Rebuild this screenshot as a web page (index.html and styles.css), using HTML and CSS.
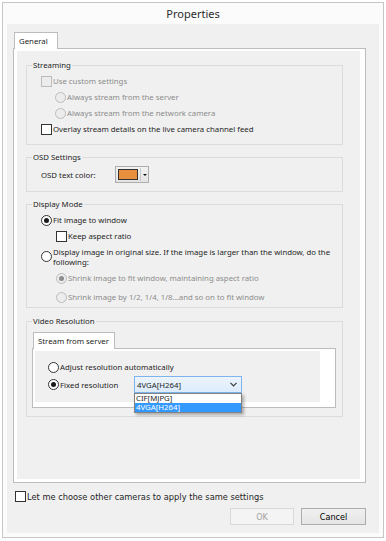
FILE: index.html
```html
<!DOCTYPE html>
<html>
<head>
    <title>Properties</title>
    <link rel="stylesheet" href="styles.css">
</head>
<body>
    <div class="window">
        <div class="titlebar">Properties</div>
        <div class="client">
            <div class="tabctl">
                <div class="tabstrip">
                    <div class="tab general">General</div>
                </div>
                <div class="tabpane main-pane">
                    <div class="page">
                        <fieldset class="group">
                            <legend>Streaming</legend>
                            <label class="opt disabled"><span class="box"></span>Use custom settings</label>
                            <label class="opt sub disabled"><span class="radio"></span>Always stream from the server</label>
                            <label class="opt sub disabled"><span class="radio"></span>Always stream from the network camera</label>
                            <label class="opt"><span class="box"></span>Overlay stream details on the live camera channel feed</label>
                        </fieldset>

                        <fieldset class="group">
                            <legend>OSD Settings</legend>
                            <div class="osd-row">
                                <span class="osd-label">OSD text color:</span>
                                <span class="color-btn">
                                    <span class="swatch"></span>
                                    <span class="arrow"></span>
                                </span>
                            </div>
                        </fieldset>

                        <fieldset class="group display">
                            <legend>Display Mode</legend>
                            <label class="opt"><span class="radio on"></span>Fit image to window</label>
                            <label class="opt sub2"><span class="box"></span>Keep aspect ratio</label>
                            <label class="opt multi"><span class="radio"></span><span>Display image in original size. If the image is larger than the window, do the following:</span></label>
                            <label class="opt sub2 disabled shrink1"><span class="radio on"></span>Shrink image to fit window, maintaining aspect ratio</label>
                            <label class="opt sub2 disabled shrink2"><span class="radio"></span>Shrink image by 1/2, 1/4, 1/8...and so on to fit window</label>
                        </fieldset>

                        <fieldset class="group video">
                            <legend>Video Resolution</legend>
                            <div class="tabctl inner">
                                <div class="tabstrip">
                                    <div class="tab server">Stream from server</div>
                                </div>
                                <div class="tabpane inner-pane">
                                    <div class="subpage">
                                        <label class="opt flat"><span class="radio"></span>Adjust resolution automatically</label>
                                        <div class="opt flat fixed">
                                            <span class="radio on"></span>
                                            <span class="fixed-label">Fixed resolution</span>
                                            <div class="combo">
                                                <span>4VGA[H264]</span>
                                                <svg width="7" height="5" viewBox="0 0 7 5"><polyline points="0.5,0.8 3.5,3.8 6.5,0.8" fill="none" stroke="#3a3a3a" stroke-width="1.2"/></svg>
                                                <div class="dropdown">
                                                    <div class="item">CIF[MJPG]</div>
                                                    <div class="item sel">4VGA[H264]</div>
                                                </div>
                                            </div>
                                        </div>
                                    </div>
                                </div>
                            </div>
                        </fieldset>
                    </div>
                </div>
            </div>

            <label class="opt apply"><span class="box"></span>Let me choose other cameras to apply the same settings</label>

            <div class="buttons">
                <button type="button" class="btn ok" disabled>OK</button>
                <button type="button" class="btn cancel">Cancel</button>
            </div>
        </div>
    </div>
</body>
</html>
```

FILE: styles.css
```css
body {
    margin: 0;
    background: #fff;
    font-family: "Noto Sans", sans-serif;
    font-size: 7.8px;
    color: #1e1e1e;
}
.window {
    width: 382px;
    margin: 2px 0 0 2px;
    padding: 0 4px 4px 4px;
    border: 1px solid #c6c6c6;
    box-sizing: border-box;
    background: #fbfbfb;
}
.titlebar {
    height: 21px;
    line-height: 21px;
    text-align: center;
    font-size: 11px;
    color: #2b2b2b;
}
.client {
    background: #f0f0f0;
    padding: 8px 13px 8px 6px;
}

/* tabs */
.tabstrip {
    display: flex;
    height: 16px;
}
.tab {
    position: relative;
    height: 17px;
    margin-left: 1px;
    padding-left: 4px;
    border: 1px solid #bcbcbc;
    border-bottom: none;
    box-sizing: border-box;
    background: #fff;
    line-height: 16px;
    white-space: nowrap;
}
.tab.general {
    width: 44px;
}
.tab.server {
    width: 82px;
}
.tabpane {
    border: 1px solid #bcbcbc;
    box-sizing: border-box;
    background: #fff;
}
.main-pane {
    height: 435px;
    padding: 2px 5px 3px 3px;
}
.page {
    height: 100%;
    box-sizing: border-box;
    padding: 6px 17px 0 9px;
    background: #f0f0f0;
}

/* group boxes */
.group {
    margin: 0;
    padding: 0 6px 7px 5px;
    border: 1px solid #dcdcdc;
    min-width: 0;
}
.group + .group {
    margin-top: 4px;
}
.group legend {
    padding: 0 1px;
    line-height: 16px;
}
.group.display {
    padding-bottom: 2px;
}
.group.video {
    margin-top: 5px;
    padding-bottom: 8px;
}

/* options */
.opt {
    display: flex;
    align-items: center;
    gap: 1px;
    height: 16px;
    margin-left: 9px;
    white-space: nowrap;
}
.opt.sub {
    margin-left: 23px;
}
.opt.sub2 {
    margin-left: 24px;
}
.opt.multi {
    height: 25px;
    line-height: 10px;
    white-space: normal;
}
.opt.shrink1 {
    margin-top: 1px;
}
.opt.shrink2 {
    margin-top: 3px;
}
.opt.disabled {
    color: #8c8c8c;
}
.box, .radio {
    flex: none;
    width: 11px;
    height: 11px;
    box-sizing: border-box;
    border: 1px solid #333;
    background: #fff;
}
.radio {
    display: flex;
    align-items: center;
    justify-content: center;
    border-radius: 50%;
}
.radio.on::after {
    content: "";
    width: 5px;
    height: 5px;
    border-radius: 50%;
    background: #1a1a1a;
}
.disabled .box, .disabled .radio {
    border-color: #bcbcbc;
    background: #ececec;
}
.disabled .radio.on::after {
    background: #8c8c8c;
}

/* osd color picker */
.osd-row {
    display: flex;
    align-items: center;
    height: 19px;
    margin-left: 9px;
}
.osd-label {
    width: 74px;
}
.color-btn {
    display: flex;
    align-items: center;
    width: 34px;
    height: 17px;
    padding-left: 2px;
    border: 1px solid #adadad;
    box-sizing: border-box;
    background: linear-gradient(#f2f2f2, #e3e3e3);
}
.swatch {
    width: 20px;
    height: 11px;
    border: 1px solid #333;
    box-sizing: border-box;
    background: #e8903d;
}
.arrow {
    display: flex;
    align-items: center;
    justify-content: center;
    width: 8px;
    height: 13px;
    margin-left: 2px;
    border-left: 1px solid #c9c9c9;
    box-sizing: border-box;
}
.arrow::after {
    content: "";
    border-left: 2px solid transparent;
    border-right: 2px solid transparent;
    border-top: 2px solid #111;
}

/* video resolution */
.tabctl.inner {
    margin-top: 3px;
}
.inner-pane {
    height: 60px;
    padding: 2px 15px 5px 2px;
}
.subpage {
    padding: 8px 0 9px 13px;
    background: #f0f0f0;
}
.opt.flat {
    margin-left: 0;
}
.opt.fixed {
    height: 17px;
    margin-top: 1px;
}
.fixed-label {
    width: 73px;
}
.combo {
    position: relative;
    display: flex;
    align-items: center;
    justify-content: space-between;
    width: 108px;
    height: 17px;
    padding: 0 4px 0 2px;
    border: 1px solid #7eb4ea;
    box-sizing: border-box;
    background: linear-gradient(#ecf4fc, #dcecfc);
}
.dropdown {
    position: absolute;
    left: -1px;
    top: 16px;
    width: 108px;
    border: 1px solid #828282;
    box-sizing: border-box;
    background: #fff;
    box-shadow: 2px 2px 3px rgba(0, 0, 0, 0.3);
}
.item {
    height: 9px;
    line-height: 9px;
    padding-left: 1px;
}
.item.sel {
    background: #3399ff;
    color: #fff;
}

/* bottom */
.opt.apply {
    margin: 5px 0 0 2px;
    font-family: "DejaVu Sans Condensed", "DejaVu Sans", sans-serif;
    font-stretch: condensed;
    font-size: 9.2px;
}
.buttons {
    display: flex;
    justify-content: flex-end;
    gap: 7px;
    margin-top: 4px;
}
.btn {
    height: 17px;
    padding: 0;
    border: 1px solid #acacac;
    box-sizing: border-box;
    background: linear-gradient(#f0f0f0, #e5e5e5);
    font-family: "DejaVu Sans Condensed", "DejaVu Sans", sans-serif;
    font-stretch: condensed;
    font-size: 9px;
    color: #000;
}
.btn.ok {
    width: 64px;
    border-color: #d9d9d9;
    background: #f4f4f4;
    color: #a3a3a3;
}
.btn.cancel {
    width: 65px;
}
```
